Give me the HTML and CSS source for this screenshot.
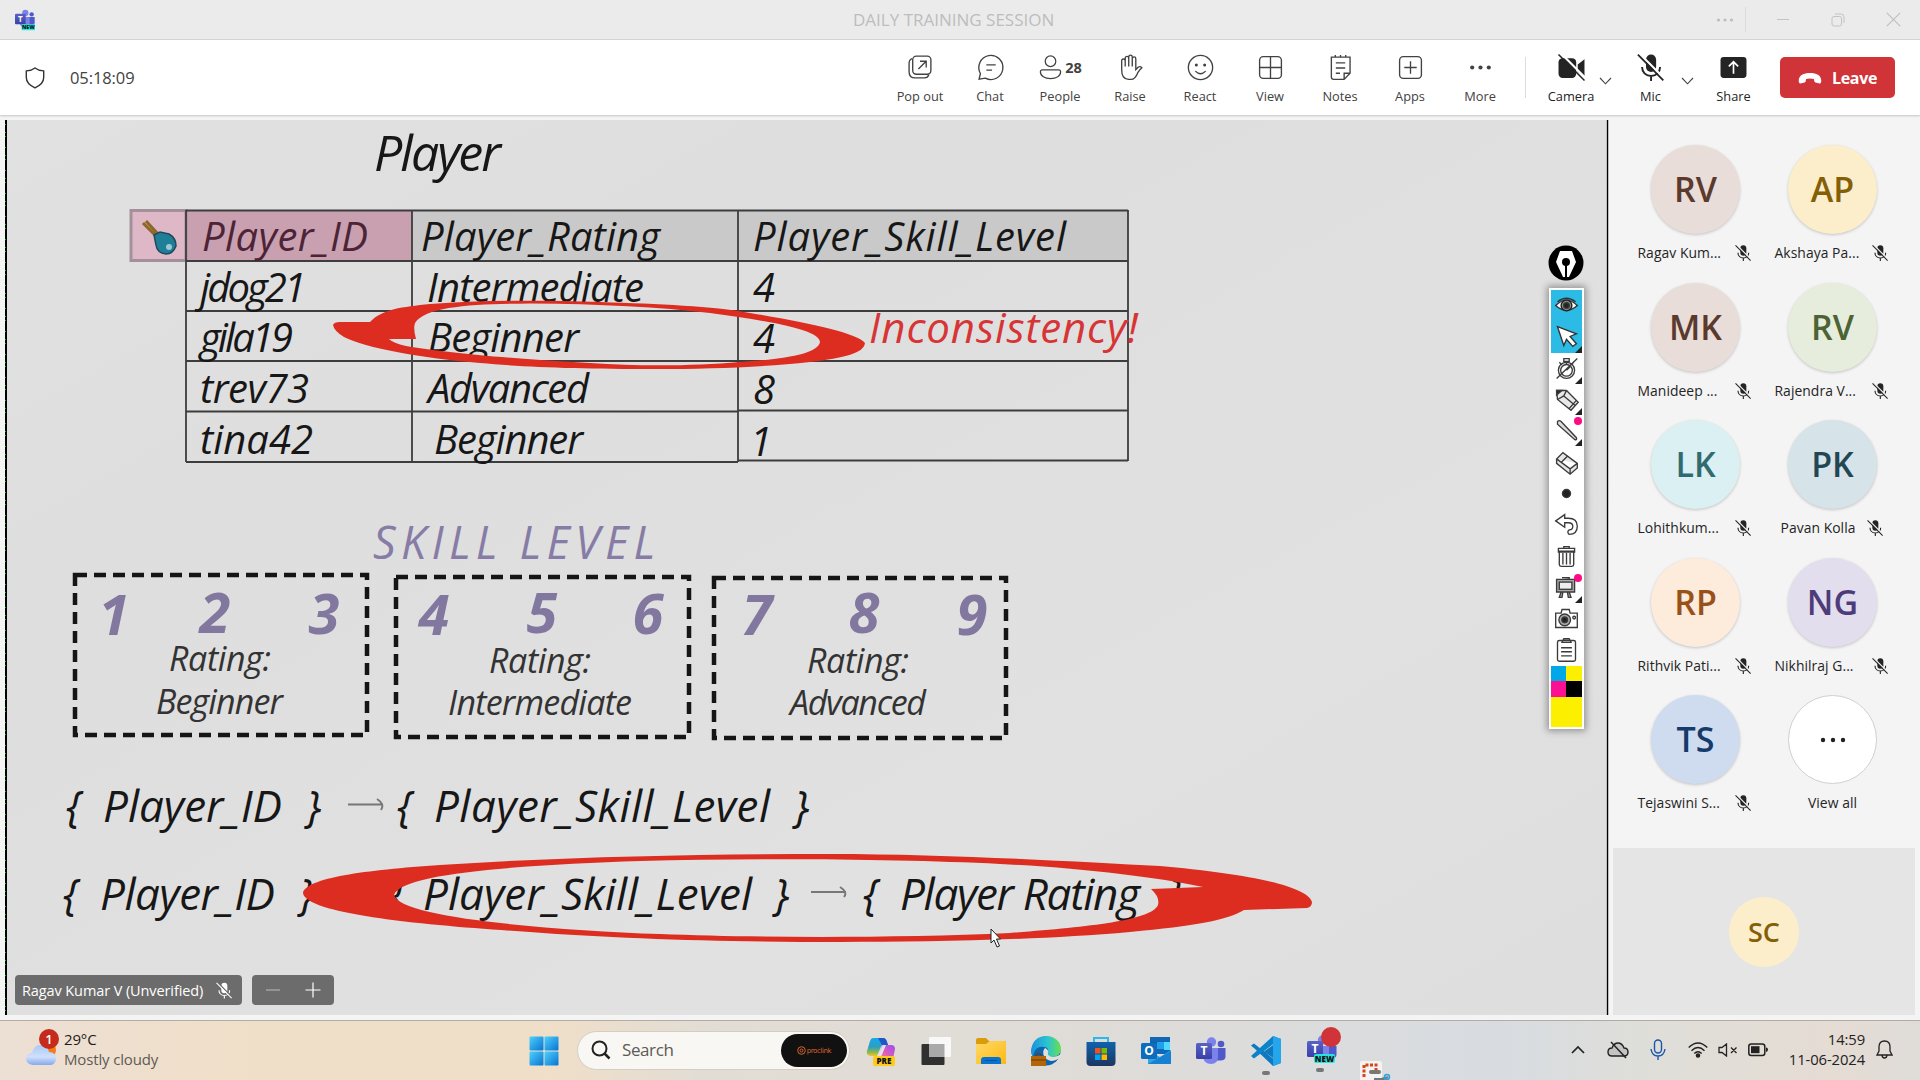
FILE: index.html
```html
<!DOCTYPE html>
<html lang="en">
<head>
<meta charset="utf-8">
<title>DAILY TRAINING SESSION</title>
<link rel="stylesheet" href="styles.css">
</head>
<body>
<svg class="defs" width="0" height="0" aria-hidden="true">
  <defs>
    <linearGradient id="winblue" x1="0" y1="0" x2="1" y2="1"><stop offset="0" stop-color="#4fd0fb"/><stop offset="1" stop-color="#0674d4"/></linearGradient>
    <linearGradient id="teamsg" x1="0" y1="0" x2="0" y2="1"><stop offset="0" stop-color="#5a62c3"/><stop offset="1" stop-color="#3940ab"/></linearGradient>
    <linearGradient id="cloudg" x1="0" y1="0" x2="0" y2="1"><stop offset="0" stop-color="#a9c9f6"/><stop offset=".6" stop-color="#cfe0fb"/><stop offset="1" stop-color="#84a9ee"/></linearGradient>
    <linearGradient id="folderg" x1="0" y1="0" x2="1" y2="1"><stop offset="0" stop-color="#ffd968"/><stop offset="1" stop-color="#fdb913"/></linearGradient>
    <linearGradient id="storeg" x1="0" y1="0" x2="0" y2="1"><stop offset="0" stop-color="#0f63ad"/><stop offset="1" stop-color="#1d3560"/></linearGradient>
    <linearGradient id="edgeg" x1="0" y1="0" x2="1" y2="0"><stop offset="0" stop-color="#1793dc"/><stop offset=".55" stop-color="#2cc3d2"/><stop offset="1" stop-color="#68e04c"/></linearGradient>
    <linearGradient id="copa" x1="0" y1="0" x2="0" y2="1"><stop offset="0" stop-color="#13a8ee"/><stop offset=".5" stop-color="#2f9fc0"/><stop offset=".8" stop-color="#8dbb49"/><stop offset="1" stop-color="#f4c430"/></linearGradient>
    <linearGradient id="copb" x1="1" y1="0" x2="0" y2="1"><stop offset="0" stop-color="#9a4ff0"/><stop offset=".5" stop-color="#d65bc0"/><stop offset="1" stop-color="#ff8a65"/></linearGradient>
    <symbol id="micoff" viewBox="0 0 24 24">
      <rect x="8" y="0.5" width="9" height="15.5" rx="4.5" fill="currentColor"/>
      <path d="M4.5 11.5c0 4.5 3.200 8 8 8s8-3.500 8-8M12.500 19.500V24" fill="none" stroke="currentColor" stroke-width="1.700"/>
      <path class="slash" d="M2.500 0L25 22.500" stroke-width="2"/>
      <path d="M.8.600L23.400 23.400" stroke="currentColor" stroke-width="1.600"/>
    </symbol>
    <symbol id="chev" viewBox="0 0 12 8"><path d="M.5 1L6 6.800 11.500 1" fill="none" stroke="currentColor" stroke-width="1.100"/></symbol>
    <symbol id="teams" viewBox="0 0 30 30">
      <circle cx="25" cy="8" r="3.300" fill="#5059c9"/><circle cx="15.500" cy="6" r="4.700" fill="#7b83eb"/>
      <path d="M20 12h9.500v8.500q0 4-5 4h-4.500z" fill="#5059c9"/>
      <path d="M7 12h15v9q0 7-7 7t-8-7z" fill="#7b83eb"/>
      <rect y="7" width="16" height="16" rx="1.500" fill="url(#teamsg)"/>
      <text x="8" y="19" text-anchor="middle" class="logoletter">T</text>
    </symbol>
  </defs>
</svg>

<header class="titlebar">
  <svg class="appicon" viewBox="0 0 30 33"><use href="#teams" width="30" height="30"/><rect x="10" y="23" width="20" height="9" rx="1" fill="#25e8e0"/><text x="20" y="30.500" text-anchor="middle" class="newtag">NEW</text></svg>
  <h1 class="title">DAILY TRAINING SESSION</h1>
  <div class="wincontrols">
    <svg width="18" height="6" viewBox="0 0 18 6" fill="#bdbdbd"><circle cx="2.500" cy="3" r="1.600"/><circle cx="9" cy="3" r="1.600"/><circle cx="15.500" cy="3" r="1.600"/></svg>
    <span class="winsep"></span>
    <svg width="14" height="14" viewBox="0 0 14 14"><path d="M1 6.500h12" stroke="#c3c3c3"/></svg>
    <svg width="14" height="14" viewBox="0 0 14 14" fill="none" stroke="#c3c3c3"><rect x="1" y="3.500" width="9.500" height="9.500" rx="2"/><path d="M4 1h6q3 0 3 3v6"/></svg>
    <svg width="15" height="15" viewBox="0 0 15 15"><path d="M.8.800l13.400 13.400M14.200.800L.8 14.200" stroke="#bdbdbd" stroke-width="1.100"/></svg>
  </div>
</header>

<nav class="toolbar">
  <svg class="shield" viewBox="0 0 20 22"><path d="M10 1c2.500 2 5.500 2.800 8.700 2.900v6.600c0 5-3.500 8-8.700 10.400C4.800 18.500 1.300 15.500 1.300 10.500V3.900C4.500 3.800 7.500 3 10 1z" fill="none" stroke="#333" stroke-width="1.400"/></svg>
  <span class="timer">05:18:09</span>
  <div class="tools">
    <div class="tool"><svg viewBox="0 0 26 26"><rect x="5.500" y="2" width="17.500" height="17.500" rx="3.500"/><path d="M5 4.500Q2 5.500 2 9v8q0 6 6 6h9q3 0 4-3M11 14.500l7-7M12.500 7H18.500v6"/></svg><span>Pop out</span></div>
    <div class="tool"><svg viewBox="0 0 26 26"><path d="M2 24.300l1.300-5.500A11.600 11.600 0 1 1 8 23.300zM9 10.500h9M9 15.500h5.500"/></svg><span>Chat</span></div>
    <div class="tool"><span class="people"><svg viewBox="0 0 26 26"><circle cx="13" cy="6.500" r="5.500"/><path d="M4.500 15.500h17q2 0 2 2c0 4.500-4.500 7-10.500 7s-10.500-2.500-10.500-7q0-2 2-2z"/></svg><b>28</b></span><span>People</span></div>
    <div class="tool"><svg viewBox="0 0 26 26"><path d="M4.500 15V6.500a1.700 1.700 0 0 1 3.400 0V12 4a1.700 1.700 0 0 1 3.400 0v8V2.800a1.700 1.700 0 0 1 3.400 0V12 4.500a1.700 1.700 0 0 1 3.400 0V15l2.500-2.500q2-1 3.400.8-2 1.500-4 4.700-2.500 6.500-6.500 6.500H11q-6.500 0-6.500-9.500z"/></svg><span>Raise</span></div>
    <div class="tool"><svg viewBox="0 0 26 26"><circle cx="13" cy="13" r="11.700"/><path d="M8 16.500q5 5 10 0"/><circle cx="9" cy="10.500" r=".8" fill="#424242"/><circle cx="17" cy="10.500" r=".8" fill="#424242"/></svg><span>React</span></div>
    <div class="tool"><svg viewBox="0 0 26 26"><rect x="2.500" y="2.500" width="21" height="21" rx="3.500"/><path d="M13 2.500v21M2.500 13h21"/></svg><span>View</span></div>
    <div class="tool"><svg viewBox="0 0 26 26"><path d="M16.500 24.500h-10q-2.300 0-2.300-2.300V3h18v15.500zM16.500 24.500v-6h5.700M8 1v2M13 1v2M18 1v2M8.500 8.500h9M8.500 13.500h9M8.500 18.500h4"/></svg><span>Notes</span></div>
    <div class="tool"><svg viewBox="0 0 26 26"><rect x="2.500" y="2.500" width="21" height="21" rx="3.500"/><path d="M13 7v12M7 13h12"/></svg><span>Apps</span></div>
    <div class="tool"><svg viewBox="0 0 26 26" class="solid"><circle cx="5" cy="13" r="2"/><circle cx="13" cy="13" r="2"/><circle cx="21" cy="13" r="2"/></svg><span>More</span></div>
  </div>
  <span class="toolsep"></span>
  <div class="tool dark"><svg viewBox="0 0 26 26" class="solid"><rect x=".5" y="4" width="17" height="19" rx="4"/><path d="M19 10l6.500-5v17L19 17z"/><path d="M2.500-1L28 24.500" class="gap"/><path d="M.5.500l25 25" class="line"/></svg><span>Camera</span></div>
  <svg class="chev"><use href="#chev"/></svg>
  <div class="tool dark mic"><svg viewBox="0 0 26 26" class="plain"><use href="#micoff" width="26" height="26"/></svg><span>Mic</span></div>
  <svg class="chev"><use href="#chev"/></svg>
  <div class="tool dark share"><svg viewBox="0 0 26 26" class="solid"><rect x=".5" y="3" width="25" height="20" rx="3"/><path d="M13 19V7.500M8.500 12L13 7.500l4.500 4.500" class="white"/></svg><span>Share</span></div>
  <button class="leave"><svg width="24" height="12" viewBox="0 0 24 12"><path d="M1 10.500C-.5 4 5 1 12 1s12.500 3 11 9.500q-.3 1-1.500.9l-4-.8q-1-.3-1.200-1.300l-.4-2.200q-4-1.200-7.800 0l-.4 2.200q-.2 1-1.200 1.300l-4 .8q-1.200 0-1.500-.9z" fill="#fff"/></svg>Leave</button>
</nav>

<main class="meeting">
  <section class="stage">
    <svg class="slide" viewBox="5 120 1604 895" width="1604" height="895">
      <defs><linearGradient id="board" x1="0" y1="0" x2="1" y2="1"><stop offset="0" stop-color="#e1e1e1"/><stop offset=".3" stop-color="#dedede"/><stop offset=".7" stop-color="#e1e1e1"/><stop offset="1" stop-color="#dedede"/></linearGradient></defs>
      <rect x="5" y="120" width="1604" height="895" fill="url(#board)"/>
      <path d="M6 120v895" stroke="#000" stroke-width="2"/><path d="M5.500 124v891" stroke="#0b0" stroke-width="1" stroke-dasharray="1 7 1 3 1 10"/>
      <path d="M1607.500 120v895" stroke="#000" stroke-width="1.300"/>
      <rect x="412" y="211" width="716" height="50" fill="#c9c9c9"/>
      <rect x="186" y="211" width="226" height="50" fill="#c9a0b0"/>
      <rect x="131" y="210.500" width="55" height="50" fill="#dfb8c7" stroke="#a3909b" stroke-width="3"/>
      <path d="M143 223l13 13M146 221l12 13" stroke="#8c6828" stroke-width="3"/><path d="M154 235l6-3 9 2q7 4 7 12-3 8-10 8-9-1-10-9z" fill="#1f7f98" stroke="#21495a" stroke-width="1.500"/><circle cx="169" cy="247" r="3" fill="#9ac9d3"/>
      <path d="M186 210.500h942M186 261h942M186 311h942M186 361h942M186 411.500h552M738 410.500h390M186 462h552M738 460.500h390M186 210v252M412 210v252M738 210v252M1128 210v251" fill="none" stroke="#3d3d3d" stroke-width="1.800"/>
      <g class="hand" font-size="40">
        <text x="374" y="171" font-size="50" textLength="127">Player</text>
        <text x="202" y="251" textLength="166" fill="#4d2436">Player_ID</text>
        <text x="421" y="251" textLength="239">Player_Rating</text>
        <text x="753" y="251" textLength="313">Player_Skill_Level</text>
        <text x="200" y="302" textLength="106">jdog21</text><text x="427" y="302" textLength="217">Intermediate</text><text x="753" y="302">4</text>
        <text x="200" y="352" textLength="93">gila19</text><text x="428" y="352" textLength="151">Beginner</text><text x="753" y="353">4</text>
        <text x="200" y="403" textLength="109">trev73</text><text x="428" y="403" textLength="161">Advanced</text><text x="753" y="404">8</text>
        <text x="200" y="454" textLength="113">tina42</text><text x="434" y="454" textLength="149">Beginner</text><text x="750" y="456">1</text>
        <text x="869" y="343" font-size="42" textLength="269" class="redtext">Inconsistency!</text>
      </g>
      <text class="skill" x="373" y="559" font-size="45" textLength="282">SKILL LEVEL</text>
      <g class="boxes"><rect x="75" y="575" width="292" height="160"/><rect x="396" y="577" width="293" height="160"/><rect x="714" y="578" width="292" height="160"/></g>
      <g class="digits" font-size="56">
        <text x="114" y="635">1</text><text x="215" y="633">2</text><text x="324" y="634">3</text><text x="434" y="635">4</text><text x="542" y="633">5</text><text x="648" y="634">6</text><text x="757" y="635">7</text><text x="864" y="633">8</text><text x="972" y="635">9</text>
      </g>
      <g class="hand mid" font-size="34">
        <text x="169" y="671" textLength="102">Rating:</text><text x="156" y="714" textLength="127">Beginner</text>
        <text x="489" y="673" textLength="102">Rating:</text><text x="448" y="715" textLength="184">Intermediate</text>
        <text x="807" y="673" textLength="102">Rating:</text><text x="790" y="715" textLength="136">Advanced</text>
      </g>
      <g class="hand" font-size="44">
        <text x="66" y="822">{</text><text x="103" y="822" textLength="179">Player_ID</text><text x="306" y="822">}</text><text x="397" y="822">{</text><text x="434" y="822" textLength="336">Player_Skill_Level</text><text x="794" y="822">}</text>
        <text x="63" y="910">{</text><text x="100" y="910" textLength="175">Player_ID</text><text x="299" y="910">}</text><text x="390" y="910">{</text><text x="423" y="910" textLength="329">Player_Skill_Level</text><text x="774" y="910">}</text><text x="863" y="910">{</text><text x="900" y="910" textLength="240">Player Rating</text><text x="1168" y="910">}</text>
      </g>
      <path d="M348 804.500h35M377 799q8 5 4 11M811 892h35M840 887q8 5 4 10" fill="none" stroke="#777" stroke-width="2"/>
      <g fill="#dd2d20" fill-rule="evenodd">
        <path d="M333 325Q334 322 340 322L370 322C382 309 402 307 430 304C482 300 540 300 600 302C660 304 712 306 750 313C805 322 858 333 865 343C864 353 845 358 810 362C765 367 710 369 655 369C580 369 525 367 480 363C422 358 365 348 344 337Q334 331 333 325ZM416 339Q413 328 415 323C426 306 475 304 530 303.500C600 304 660 307 710 313C770 321 820 330 820 342C818 354 785 359 740 362C695 366 640 366.500 590 363C510 359 442 352 406 346Q393 343 389 339Z"/>
        <path d="M303 893C306 878 365 870 440 865C560 857 700 854 830 854C950 854 1080 862 1160 866C1240 873 1307 885 1312 902Q1312 907 1307 908L1244 910C1228 920 1195 926 1130 932C1040 940 930 942 840 942C730 942 620 939 530 932C435 926 306 915 303 893ZM394 895C401 872 530 865 640 861C760 858 900 859 1000 864C1080 868 1155 877 1203 887L1151 889Q1160 897 1158 905C1151 921 1085 927 1010 933C900 938 760 938 660 934C550 930 400 918 394 895Z"/>
      </g>
      <path d="M991 929v14l3-3 3 7 2.500-1-3-7h4z" fill="#fff" stroke="#222" stroke-width="1"/>
    </svg>

    <div class="pen"><svg viewBox="0 0 36 36"><circle cx="18" cy="18" r="17.500" fill="#000"/><path d="M12 6h12l4 11-7 15h-2V20.500h-2V32h-2L8 17z" fill="#fff"/><path d="M18 19v13" stroke="#000" stroke-width="1.600"/><circle cx="18" cy="17" r="4" fill="#000"/></svg></div>
    <div class="palette">
      <span class="cell on"><svg viewBox="0 0 30 30"><path d="M3 15Q15 3 27 15 15 26 3 15z" fill="#fff" stroke="#333" stroke-width="1.500"/><circle cx="15" cy="15" r="6" fill="#888" stroke="#222"/><circle cx="15" cy="15" r="3.200" fill="#222"/><path d="M5 11Q15 3 25 11" fill="none" stroke="#333"/></svg></span>
      <span class="cell on more"><svg viewBox="0 0 30 30"><path d="M5 4l21 8-7 3 7 8-4 3-7-8-3 7z" fill="#fff" stroke="#333" stroke-width="1.500"/></svg></span>
      <span class="cell more"><svg viewBox="0 0 30 30"><circle cx="15" cy="17" r="9"/><circle cx="15" cy="17" r="6.500"/><path d="M12 4h6v3h-6zM15 7v3M7 8l3 3M23 8l-3 3M4 26L27 4M15 17l4-4"/></svg></span>
      <span class="cell more"><svg viewBox="0 0 30 30"><path d="M4 5l11 0 13 13-8 9L5 15zM15 5l-3 6-7 4M12 11l13 11M18 25l8-9" fill="#e8e8e8"/><path d="M4 5l6 0-6 5z" fill="#222"/></svg></span>
      <span class="cell more dot"><svg viewBox="0 0 30 30"><path d="M5 5q2-2 4 0l17 18q1 3-2 2L5 8z" fill="#ddd"/></svg></span>
      <span class="cell"><svg viewBox="0 0 30 30"><path d="M4 11l7-7 16 12v5l-8 7L4 16zM4 11l15 11 8-6M19 22v6M9 15l7-7" fill="#e5e5e5"/></svg></span>
      <span class="cell"><svg viewBox="0 0 30 30"><circle cx="15" cy="15" r="4.500" fill="#222"/></svg></span>
      <span class="cell"><svg viewBox="0 0 30 30"><path d="M3 11l10-7v4h4q10 0 10 9t-9 9q-3-3 0-5 4 0 4-4t-5-4h-4v5z" fill="#fff"/></svg></span>
      <span class="cell"><svg viewBox="0 0 30 30"><path d="M7 9h16v15q0 2-2 2H9q-2 0-2-2zM6 6h18v4H6zM12 6V4h6v2M11 11v13M15 11v13M19 11v13"/></svg></span>
      <span class="cell more dot"><svg viewBox="0 0 30 30"><path d="M4 6h20v14H4zM10 4h8v2M9 20l-2 6h3l1-6M18 20l2 6h-3l-1-6" fill="#aaa"/><rect x="7" y="9" width="14" height="8" fill="#eee"/></svg></span>
      <span class="cell"><svg viewBox="0 0 30 30"><path d="M3 9h6l1-4h8l1 4h8v16H3z" fill="#fff"/><circle cx="13" cy="16.500" r="6.500" fill="#aaa"/><circle cx="13" cy="16.500" r="3.200" fill="#222"/><circle cx="23.500" cy="14" r="1.500"/></svg></span>
      <span class="cell"><svg viewBox="0 0 30 30"><path d="M7 5h16q2 0 2 2v19q0 2-2 2H7q-2 0-2-2V7q0-2 2-2zM10 7l2-4h6l2 4zM9 13h12M9 17.500h12M9 22h12"/></svg></span>
      <span class="swatches"><i class="cyan"></i><i class="yellow"></i><i class="pink"></i><i class="black"></i></span>
      <span class="current"></span>
    </div>
    <div class="caption"><span class="speaker">Ragav Kumar V (Unverified)<svg><use href="#micoff"/></svg></span>
      <span class="zoombox"><svg width="16" height="16" viewBox="0 0 16 16"><path d="M1 8h14" stroke="#aaa" stroke-width="1.300"/></svg><svg width="16" height="16" viewBox="0 0 16 16"><path d="M.5 8h15M8 .5v15" stroke="#fff" stroke-width="1.200"/></svg></span></div>
  </section>

  <aside class="roster">
    <div class="people-grid">
      <div class="person"><b class="avatar brown">RV</b><span class="name"><em>Ragav Kum...</em><svg><use href="#micoff"/></svg></span></div>
      <div class="person"><b class="avatar gold">AP</b><span class="name"><em>Akshaya Pa...</em><svg><use href="#micoff"/></svg></span></div>
      <div class="person"><b class="avatar brown">MK</b><span class="name"><em>Manideep ...</em><svg><use href="#micoff"/></svg></span></div>
      <div class="person"><b class="avatar green">RV</b><span class="name"><em>Rajendra V...</em><svg><use href="#micoff"/></svg></span></div>
      <div class="person"><b class="avatar teal">LK</b><span class="name"><em>Lohithkum...</em><svg><use href="#micoff"/></svg></span></div>
      <div class="person"><b class="avatar steel">PK</b><span class="name short"><em>Pavan Kolla</em><svg><use href="#micoff"/></svg></span></div>
      <div class="person"><b class="avatar peach">RP</b><span class="name"><em>Rithvik Pati...</em><svg><use href="#micoff"/></svg></span></div>
      <div class="person"><b class="avatar purple">NG</b><span class="name"><em>Nikhilraj G...</em><svg><use href="#micoff"/></svg></span></div>
      <div class="person"><b class="avatar blue">TS</b><span class="name"><em>Tejaswini S...</em><svg><use href="#micoff"/></svg></span></div>
      <div class="person"><b class="avatar all"><svg width="26" height="6" viewBox="0 0 26 6" fill="#222"><circle cx="3" cy="3" r="2.200"/><circle cx="13" cy="3" r="2.200"/><circle cx="23" cy="3" r="2.200"/></svg></b><span class="name viewall">View all</span></div>
    </div>
    <div class="selftile"><b class="avatar gold small">SC</b></div>
  </aside>
</main>

<footer class="taskbar">
  <div class="weather">
    <svg width="36" height="38" viewBox="0 0 36 38"><circle cx="24" cy="21" r="8" fill="#f47a1c"/><path d="M9 36q-7-1-7-7 1-5 6-5 2-9 10-8 6 1 7 7 7 0 7 7-1 6-6 6z" fill="url(#cloudg)"/><circle cx="25" cy="10" r="10" fill="#c42b1c"/><text x="25" y="15" text-anchor="middle" class="badge">1</text></svg>
    <p><span>29°C</span><span class="dim">Mostly cloudy</span></p>
  </div>
  <div class="apps">
    <svg width="30" height="30" viewBox="0 0 30 30" fill="url(#winblue)"><rect x=".5" y=".5" width="14" height="14" rx="1"/><rect x="15.500" y=".5" width="14" height="14" rx="1"/><rect x=".5" y="15.500" width="14" height="14" rx="1"/><rect x="15.500" y="15.500" width="14" height="14" rx="1"/></svg>
    <div class="search"><svg width="20" height="20" viewBox="0 0 20 20"><circle cx="8.500" cy="8.500" r="7" fill="none" stroke="#222" stroke-width="2"/><path d="M13.500 13.500l5 5" stroke="#222" stroke-width="2.500"/></svg><span>Search</span><i class="promo"><svg width="9" height="9" viewBox="0 0 9 9"><circle cx="4.500" cy="4.500" r="3.800"/><circle cx="4.500" cy="4.500" r="1.500"/></svg>proclink</i></div>
    <div class="icons">
      <svg viewBox="0 0 30 30"><path d="M7 2h10q3 0 4 4l1 3h-4q-3 0-4 4l-3 7H4q-4-1-3-5L4 5q1-3 3-3z" fill="url(#copa)"/><path d="M12 2h5q3 0 4 4l1 3h-6z" fill="#1f57c9"/><path d="M18 9h7q4 0 4 4l-2 10H11l4-10q1-4 3-4z" fill="url(#copb)"/><path d="M17 9h3l-5 12h-4z" fill="#e6e0ee"/><rect x="7" y="20" width="22" height="10" rx="2" fill="#ffcb1c"/><text x="18" y="28" text-anchor="middle" class="tag">PRE</text></svg>
      <svg viewBox="0 0 30 30"><rect x=".5" y="8" width="23" height="21" rx="1" fill="#303030"/><rect x="8" y="1" width="22" height="20" rx="1" fill="#f8f8f8"/><rect x="8" y="8" width="15.500" height="13" fill="#a9a9a9"/></svg>
      <svg viewBox="0 0 30 30"><path d="M0 4q0-2 2-2h8l3 3h15q2 0 2 2v4H0z" fill="#dc9b0a"/><path d="M0 8h10l4-3h14q2 0 2 2v21H0z" fill="url(#folderg)"/><path d="M5 28v-4q0-3 3-3h14q3 0 3 3v4z" fill="#0873ce"/><path d="M9 24.500h12" stroke="#05539c"/></svg>
      <svg viewBox="0 0 30 30"><circle cx="15" cy="15" r="14.500" fill="#0c65ae"/><path d="M0 15C1 5 7 0 15 0c9 0 15 6 15 13 0 5-4 8-9 8-3 0-5-1-5-3 2-4 1-7-3-7C6 10 3 14 2 21Q0 18 0 15z" fill="url(#edgeg)"/><path d="M14 12q-3 3-1 8 2 4 7 5 5 0 10-4v-3q-4 3-8 3-6-1-5-4 1-3-3-5z" fill="#e2dfda"/><rect x="0" y="20" width="15" height="10" fill="#b36608"/><path d="M0 24h15M5 20v-2h5v2" fill="none" stroke="#713800"/></svg>
      <svg viewBox="0 0 30 30"><path d="M8 7V2h14v5" fill="none" stroke="#27b9ef" stroke-width="2"/><path d="M.5 6h29v20q0 4-4 4h-21q-4 0-4-4z" fill="url(#storeg)"/><path fill="#f25022" d="M9 12h5.500v5.500H9z"/><path fill="#7fba00" d="M15.500 12H21v5.500h-5.500z"/><path fill="#00a4ef" d="M9 18.500h5.500V24H9z"/><path fill="#ffb900" d="M15.500 18.500H21V24h-5.500z"/></svg>
      <svg viewBox="0 0 30 30"><path d="M9 1h20v17H9z" fill="#1068b5"/><path d="M9 6h7v11H9z" fill="#0b5ca9"/><path d="M16 6h7v7h-7z" fill="#20a0e8"/><path d="M23 6h6v8h-6z" fill="#50d9ff"/><path d="M7 14l12 7 11-7v13q0 1-1 1H7z" fill="#2fa5e6"/><path d="M7 28l23-13v12q0 1-1 1z" fill="#1680d3"/><rect y="7" width="16" height="16" rx="1.500" fill="#0f6cbd"/><text x="8" y="19" text-anchor="middle" class="logoletter">O</text></svg>
      <svg viewBox="0 0 30 30"><use href="#teams" width="30" height="30"/></svg>
      <svg viewBox="0 0 30 38"><path fill-rule="evenodd" d="M22 0l8 3v24l-8 3-19-18-2-1.500L0 9.500l3-2 19 15zM22 9v13l-9-6.500z" fill="#0f79c0"/><path d="M22 0L0 20l3 2.500L23 7.500z" fill="#0b83ca"/><path d="M22 0l8 3v24l-8 3z" fill="#25a5ec"/><rect x="11" y="35" width="8" height="4" rx="2" fill="#777"/></svg>
      <svg viewBox="0 0 36 46" class="newteams"><use href="#teams" y="7" width="30" height="30"/><circle cx="24" cy="10" r="10" fill="#d13438"/><rect x="7" y="27" width="21" height="9" rx="2" fill="#27e5dc"/><text x="17.500" y="34.500" text-anchor="middle" class="tag">NEW</text><rect x="9" y="41" width="8" height="4" rx="2" fill="#777"/></svg>
      <svg viewBox="0 0 32 20" class="snip"><rect x="0" y="0" width="22" height="22" rx="2" fill="#f5f3f2"/><path d="M4 16V4h12v8" fill="none" stroke="#d84519" stroke-width="3" stroke-dasharray="3 1.500"/><path d="M14 18h10l4-2" stroke="#697987" stroke-width="2"/><circle cx="27" cy="16" r="2.500" fill="none" stroke="#2aa0dc" stroke-width="1.500"/><rect x="9" y="9" width="12" height="4" rx="2" fill="#777"/></svg>
    </div>
  </div>
  <div class="tray">
    <svg width="14" height="9" viewBox="0 0 14 9"><path d="M1 8l6-6 6 6" fill="none" stroke="#222" stroke-width="1.700"/></svg>
    <svg width="22" height="18" viewBox="0 0 22 18"><path d="M5 15q-4 0-4-4t4-4Q7 2 11 2t6 5q4 0 4 4t-4 4z" fill="#c4c4c4" stroke="#222" stroke-width="1.400"/><path d="M4 1l15 16" stroke="#222" stroke-width="1.500"/></svg>
    <svg width="16" height="21" viewBox="0 0 16 21" fill="none" stroke="#1a56ac" stroke-width="1.400"><rect x="4.500" y="1" width="7" height="13" rx="3.500"/><path d="M1 10q1 7 7 7t7-7M8 17v4"/></svg>
    <svg width="20" height="16" viewBox="0 0 20 16" fill="none" stroke="#222" stroke-width="1.400"><path d="M.7 5.500q9.300-9 18.600 0M3.500 8.700q6.500-6.500 13 0M6.300 11.500q3.700-3.700 7.400 0"/><circle cx="10" cy="13.500" r="1.600" fill="#222"/></svg>
    <svg width="20" height="14" viewBox="0 0 20 14" fill="none" stroke="#222" stroke-width="1.300"><path d="M1 4.500h3L8.500 1v12L4 9.500H1zM13 4.500l5.500 5.500M18.500 4.500L13 10"/></svg>
    <svg width="20" height="14" viewBox="0 0 20 14"><rect x=".8" y="1" width="16" height="11.500" rx="2.500" fill="none" stroke="#222" stroke-width="1.500"/><rect x="3" y="3.200" width="8.500" height="7" fill="#222"/><path d="M18 4.500q2 0 2 2t-2 2.500z" fill="#222"/></svg>
    <p class="clock"><span>14:59</span><span>11-06-2024</span></p>
    <svg width="17" height="19" viewBox="0 0 17 19" fill="none" stroke="#222" stroke-width="1.300"><path d="M1 15l2-4V7q0-6 5.500-6T14 7v4l2 4zM6 15.500q.5 2.500 2.500 2.500t2.500-2.500"/></svg>
  </div>
</footer>
</body>
</html>
```
FILE: styles.css
```css
* { box-sizing: border-box; }
body {
  margin: 0;
  width: 1920px;
  height: 1080px;
  overflow: hidden;
  display: grid;
  grid-template-rows: 40px 75px 905px 60px;
  font-family: "Open Sans", "Noto Sans", sans-serif;
  font-stretch: 95%;
  color: #424242;
  background: #f4f4f4;
}
svg { display: block; flex: none; }
p, h1 { margin: 0; }
.defs { position: absolute; }
.slash { stroke: var(--under, #fff); }
.logoletter { font: 700 12px "Open Sans", sans-serif; fill: #fff; }
.tag { font: 800 8px "Open Sans", sans-serif; fill: #111; }
.newtag { font: 800 8px "Open Sans", sans-serif; fill: #111; }

/* Title bar */
.titlebar {
  display: grid;
  grid-template-columns: 853px 1fr 208px;
  align-items: center;
  background: #ebebeb;
  border-bottom: 1px solid #d6d6d6;
}
.appicon { width: 20px; height: 22px; margin-left: 15px; }
.title { font-size: 17px; font-weight: 400; letter-spacing: 0; color: #bdbdbd; }
.wincontrols { display: flex; align-items: center; }
.wincontrols svg:first-child { margin-left: 4px; }
.winsep { width: 1px; height: 25px; margin: 0 30px 0 11px; background: #dcdcdc; }
.wincontrols svg:nth-of-type(n+3) { margin-left: 41px; }

/* Meeting toolbar */
.toolbar {
  display: flex;
  align-items: center;
  background: #fff;
  box-shadow: 0 1px 2px rgba(0, 0, 0, .2);
  z-index: 1;
}
.shield { width: 20px; height: 24px; margin-left: 25px; }
.timer { width: 840px; flex: none; padding-left: 25px; font-size: 16.500px; letter-spacing: -.1px; }
.tools { display: flex; }
.tool { width: 70px; flex: none; height: 75px; padding-top: 14px; display: flex; flex-direction: column; align-items: center; gap: 6px; font-size: 12.800px; line-height: 18px; white-space: nowrap; }
.tool svg { width: 27px; height: 27px; fill: none; stroke: #424242; stroke-width: 1.300; overflow: visible; }
.tool svg.solid { fill: #424242; stroke: none; }
.dark { color: #242424; }
.tool.dark svg.solid { fill: #242424; }
.tool svg.plain { stroke: none; }
.gap { stroke: #fff; stroke-width: 2; }
.line { stroke: #242424; stroke-width: 1.500; }
.white { fill: none; stroke: #fff; stroke-width: 1.600; }
.people { display: flex; align-items: center; gap: 2px; }
.people b { font-size: 14.500px; line-height: 27px; }
.people svg { width: 25px; height: 27px; }
.toolsep { width: 1px; height: 41px; margin: 0 10px 0 10px; background: #dcdcdc; }
.chev { width: 13px; height: 8px; margin: 6px 1px 0 -7px; }
.mic { width: 75px; }
.share { width: 77px; }
.leave {
  width: 115px;
  height: 41px;
  margin-left: 8px;
  padding: 0;
  display: flex;
  flex: none;
  align-items: center;
  justify-content: center;
  gap: 10px;
  border: 0;
  border-radius: 5px;
  background: #d13438;
  color: #fff;
  font: 700 16px "Open Sans", sans-serif;
  letter-spacing: -.3px;
}

/* Shared content */
.meeting { display: grid; grid-template-columns: 1609px 311px; }
.stage { position: relative; padding: 5px 0 0 5px; }
.slide { overflow: visible; }
.hand { font-family: "Open Sans", sans-serif; font-style: italic; font-weight: 500; font-stretch: 93%; fill: #171717; }
.mid { fill: #333; }
.redtext { fill: #d73535; font-stretch: 96%; }
.skill { font-family: "Open Sans", sans-serif; font-style: italic; font-stretch: 100%; fill: #867ca6; }
.digits { font-family: "Open Sans", sans-serif; font-style: italic; font-weight: 700; font-stretch: 90%; fill: #82789f; text-anchor: middle; }
.boxes rect { fill: none; stroke: #151515; stroke-width: 4.500; stroke-dasharray: 12 7; }

.pen { position: absolute; left: 1548px; top: 130px; width: 36px; height: 36px; }
.palette {
  position: absolute;
  left: 1549px;
  top: 173px;
  width: 35px;
  height: 441px;
  padding: 2px;
  background: #fff;
  box-shadow: 0 0 7px 2px rgba(0, 0, 0, .35);
}
.cell { position: relative; display: flex; justify-content: center; align-items: center; height: 31.300px; }
.cell svg { width: 27px; height: 27px; fill: none; stroke: #3b3b3b; stroke-width: 1.500; }
.on { background: #2cbbe5; }
.more::after { content: ""; position: absolute; right: 0; bottom: 0; border: solid transparent; border-width: 7px 0 0 7px; border-bottom: 7px solid #222; border-top: 0; }
.dot::before { content: ""; position: absolute; right: 0; top: 2px; width: 8px; height: 8px; border-radius: 50%; background: #fb0c85; }
.swatches { display: grid; grid-template: 15px 16px / 15px 16px; }
.cyan { background: #00a8e8; }
.yellow, .current { background: #fcf000; }
.pink { background: #fb1192; }
.black { background: #000; }
.current { display: block; height: 30px; }

.caption { position: absolute; left: 15px; top: 860px; display: flex; gap: 10px; }
.speaker, .zoombox { --under: #6c6c6c; display: flex; align-items: center; height: 30px; border-radius: 4px; background: #6c6c6c; color: #fff; }
.speaker { width: 227px; padding: 0 10px 0 7px; justify-content: space-between; font-size: 14.500px; letter-spacing: -.1px; white-space: nowrap; }
.speaker svg { width: 16px; height: 17px; }
.zoombox { width: 82px; padding: 0 13px; justify-content: space-between; }

/* Participants */
.roster { display: flex; flex-direction: column; justify-content: space-between; padding: 30px 5px 5px 4px; }
.people-grid { display: grid; grid-template-columns: 137px 137px; grid-auto-rows: 137.500px; padding-left: 14px; }
.person { display: flex; flex-direction: column; align-items: center; }
.avatar { width: 89px; height: 89px; padding-bottom: 1px; border-radius: 50%; display: flex; align-items: center; justify-content: center; font-size: 34px; font-weight: 600; line-height: 1; box-shadow: 0 1px 3px rgba(0, 0, 0, .2); }
.brown { background: #e9ddd9; color: #5b392c; }
.gold { background: #fdeecb; color: #835f08; }
.green { background: #e6eddd; color: #4c6333; }
.teal { background: #dbf0f2; color: #316b6f; }
.steel { background: #d6e3e9; color: #224653; }
.peach { background: #fdebdc; color: #985118; }
.purple { background: #e3deee; color: #4d3c79; }
.blue { background: #cfdcef; color: #163a6b; }
.all { background: #fff; border: 1px solid #d0d0d0; box-shadow: none; padding: 0; }
.small { width: 70px; height: 70px; font-size: 27px; box-shadow: none; }
.name { --under: #f4f4f4; width: 116px; height: 20px; margin-top: 9px; padding-right: 3px; display: flex; align-items: center; justify-content: space-between; font-size: 13.900px; letter-spacing: .05px; line-height: 20px; color: #242424; white-space: nowrap; }
.name em { font-style: normal; }
.name svg { width: 16px; height: 16px; }
.short { width: 104px; padding-right: 2px; }
.viewall { justify-content: center; padding: 0; }
.selftile { height: 167px; display: flex; align-items: center; justify-content: center; background: #e5e5e5; }

/* Taskbar */
.taskbar {
  display: grid;
  grid-template-columns: 529px 1fr 350px;
  align-items: center;
  border-top: 1px solid #b2aca5;
  background: linear-gradient(90deg, #ecdfd4 0, #f0dfc8 250px, #f0dfc8 540px, #e2ddd4 700px, #dfdcd8 1100px, #d8dce1 1500px, #dfded8 1660px, #e5dcd4 1830px, #dfdcd8 1920px);
}
.weather { display: flex; align-items: center; gap: 4px; padding: 0 0 6px 24px; font-size: 15px; line-height: 20px; color: #1c1c1c; }
.weather p, .clock { display: flex; flex-direction: column; }
.weather p { padding-top: 2px; letter-spacing: -.15px; }
.dim { color: #5f5a55; }
.badge { font: 600 13px "Open Sans", sans-serif; fill: #fff; }
.apps { display: flex; align-items: center; height: 59px; }
.search { width: 273px; height: 39px; margin-left: 18px; padding: 0 2px 2px 13px; display: flex; align-items: center; gap: 11px; border: 1px solid #d5cdc3; border-radius: 20px; background: #f9f7f3; font-size: 17px; color: #5d5a56; letter-spacing: -.4px; }
.promo { width: 66px; height: 33px; margin: 2px 0 0 auto; display: flex; align-items: center; justify-content: center; gap: 1px; border-radius: 17px; background: #111; color: #d9652a; font: 7px "DejaVu Sans", sans-serif; }
.promo svg { fill: none; stroke: #d9652a; stroke-width: 1; }
.icons { display: flex; align-items: center; gap: 25px; margin-left: 16px; }
.icons > svg { width: 30px; height: 30px; overflow: visible; }
.icons > svg:nth-child(8) { height: 38px; margin-top: 8px; }
.icons > svg.newteams { width: 36px; height: 46px; margin: -2px -6px 0 1px; }
.icons > svg.snip { width: 32px; height: 20px; margin: 40px 0 0 -2px; }
.tray { display: grid; grid-template-columns: 14px 22px 16px 20px 20px 20px 1fr 17px; align-items: center; padding: 0 27px 2px 1px; }
.tray > svg:nth-child(2) { margin-left: 22px; }
.tray > svg:nth-child(3) { margin-left: 43px; }
.tray > svg:nth-child(4) { margin-left: 65px; }
.tray > svg:nth-child(5) { margin-left: 75px; }
.tray > svg:nth-child(6) { margin-left: 85px; }
.clock { align-items: flex-end; padding: 0 11px 2px 0; font-size: 14.800px; line-height: 20px; letter-spacing: -.1px; color: #222; white-space: nowrap; }
```
